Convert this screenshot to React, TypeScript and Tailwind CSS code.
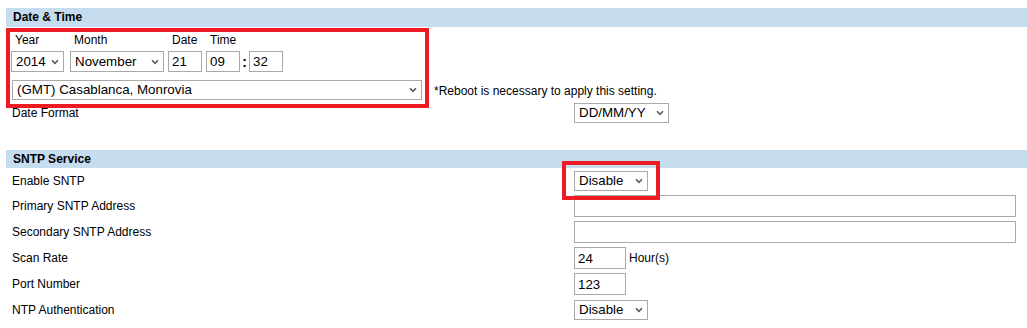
import React from 'react';

const Chevron = () => (
    <svg width="8" height="6" viewBox="0 0 8 6" className="shrink-0">
        <path d="M1 1.2 L4 4.4 L7 1.2" fill="none" stroke="#5a5a5a" strokeWidth="1.6" />
    </svg>
);

interface SelectBoxProps {
    value: string;
    className: string;
}

const SelectBox = ({ value, className }: SelectBoxProps) => (
    <div className={`flex items-center justify-between border border-[#a9a9a9] bg-white pl-[4px] pr-[4px] text-[13.33px] leading-none ${className}`}>
        <span>{value}</span>
        <Chevron />
    </div>
);

interface TextBoxProps {
    value?: string;
    className: string;
}

const TextBox = ({ value = '', className }: TextBoxProps) => (
    <input
        type="text"
        readOnly
        value={value}
        className={`border border-[#a9a9a9] bg-white pl-[3px] text-[13.33px] leading-none outline-none ${className}`}
    />
);

const SectionHeader = ({ title, className }: { title: string; className: string }) => (
    <div className={`bg-[#c6dcef] pl-[7px] font-bold ${className}`}>{title}</div>
);

const Row = ({ label, height, children }: { label: string; height: string; children: React.ReactNode }) => (
    <div className={`flex items-center ${height}`}>
        <div className="w-[568px] shrink-0 pl-[6px]">{label}</div>
        {children}
    </div>
);

export default function App() {
    return (
        <div className="relative h-[328px] w-[1027px] overflow-hidden bg-white pl-[6px] pt-[8px] font-['Liberation_Sans',Arial,sans-serif] text-[12px] text-black">
            <SectionHeader title="Date & Time" className="h-[19px] leading-[19px]" />

            {/* Date / time pickers */}
            <div className="ml-[5px] mt-[6px] flex items-start">
                <div className="flex flex-col">
                    <span className="h-[14px] pl-[4px] leading-[14px]">Year</span>
                    <SelectBox value="2014" className="mt-[4px] h-[21px] w-[53px]" />
                </div>
                <div className="ml-[6px] flex flex-col">
                    <span className="h-[14px] pl-[4px] leading-[14px]">Month</span>
                    <SelectBox value="November" className="mt-[4px] h-[21px] w-[94px]" />
                </div>
                <div className="ml-[4px] flex flex-col">
                    <span className="h-[14px] pl-[4px] leading-[14px]">Date</span>
                    <TextBox value="21" className="mt-[4px] h-[21px] w-[34px]" />
                </div>
                <div className="ml-[4px] flex flex-col">
                    <span className="h-[14px] pl-[4px] leading-[14px]">Time</span>
                    <div className="mt-[4px] flex items-center">
                        <TextBox value="09" className="h-[21px] w-[34px]" />
                        <span className="w-[9px] text-center text-[14px] font-bold leading-none">:</span>
                        <TextBox value="32" className="h-[21px] w-[34px]" />
                    </div>
                </div>
            </div>

            <div className="mt-[8px] flex items-center">
                <SelectBox value="(GMT) Casablanca, Monrovia" className="ml-[6px] h-[20px] w-[410px]" />
                <span className="ml-[12px] mt-[1px]">*Reboot is necessary to apply this setting.</span>
            </div>

            <div className="mt-[3px]">
                <Row label="Date Format" height="h-[20px]">
                    <SelectBox value="DD/MM/YY" className="h-[20px] w-[95px]" />
                </Row>
            </div>

            <SectionHeader title="SNTP Service" className="mt-[27px] h-[18px] leading-[18px]" />

            <Row label="Enable SNTP" height="h-[25px]">
                <SelectBox value="Disable" className="h-[20px] w-[74px]" />
            </Row>
            <Row label="Primary SNTP Address" height="h-[26px]">
                <TextBox className="h-[22px] w-[442px]" />
            </Row>
            <Row label="Secondary SNTP Address" height="h-[26px]">
                <TextBox className="h-[22px] w-[442px]" />
            </Row>
            <Row label="Scan Rate" height="h-[26px]">
                <TextBox value="24" className="h-[22px] w-[52px]" />
                <span className="ml-[3px]">Hour(s)</span>
            </Row>
            <Row label="Port Number" height="h-[26px]">
                <TextBox value="123" className="h-[22px] w-[52px]" />
            </Row>
            <Row label="NTP Authentication" height="h-[26px]">
                <SelectBox value="Disable" className="h-[20px] w-[74px]" />
            </Row>

            {/* annotation boxes drawn over the form */}
            <div className="pointer-events-none absolute left-[6px] top-[28px] h-[80px] w-[423px] border-4 border-[#ed1c24]" />
            <div className="pointer-events-none absolute left-[562px] top-[161px] h-[39px] w-[98px] border-4 border-[#ed1c24]" />
        </div>
    );
}
